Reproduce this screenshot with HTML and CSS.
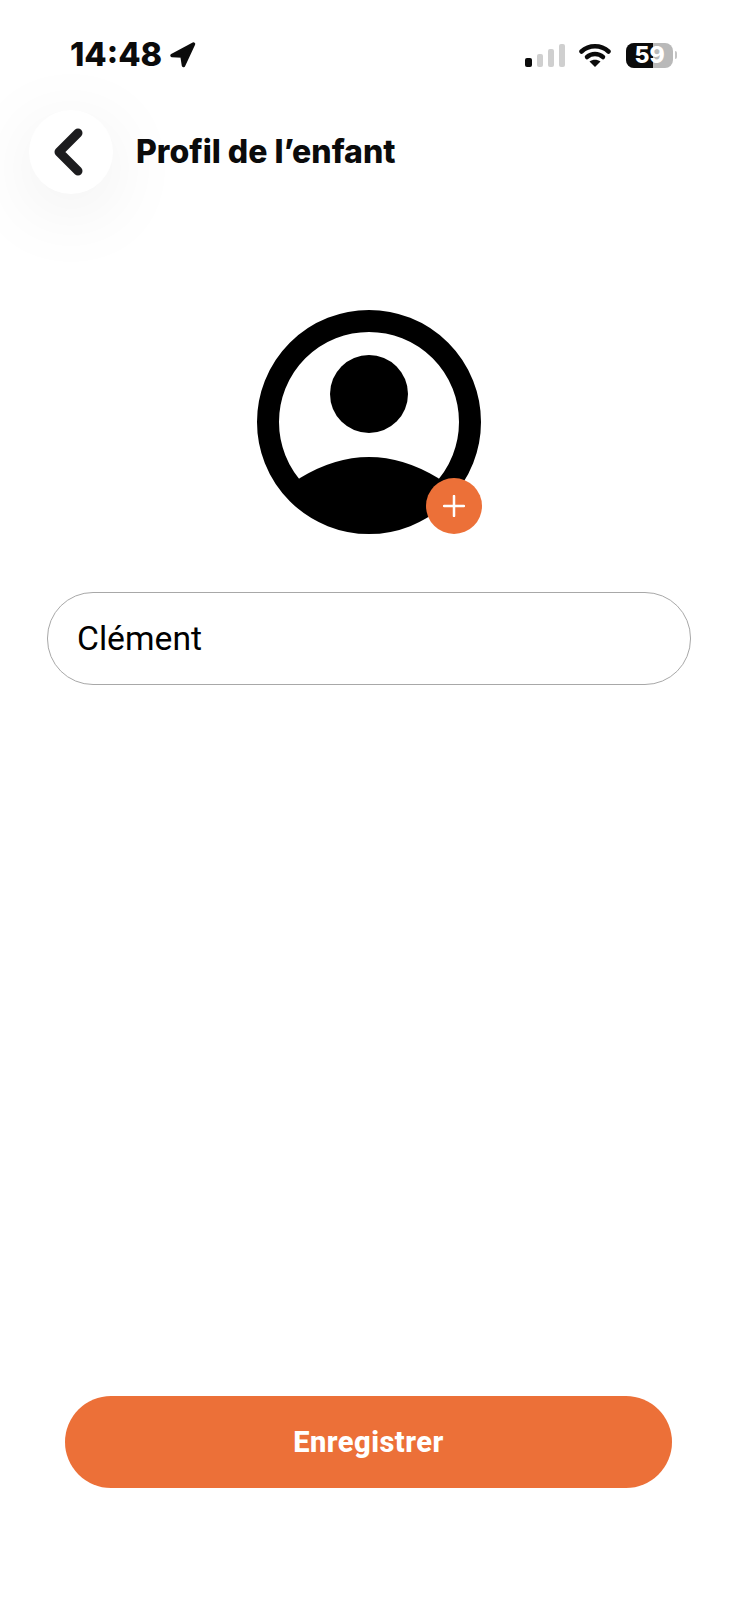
FILE: index.html
```html
<!DOCTYPE html>
<html lang="fr">
<head>
    <meta charset="UTF-8">
    <meta name="viewport" content="width=device-width, initial-scale=1.0">
    <title>Profil de l'enfant</title>
    <link rel="stylesheet" href="styles.css">
</head>
<body>
    <div class="status-bar">
        <div class="status-left">
            <span class="time">14:48</span>
            <svg class="location" width="27" height="26" viewBox="0 0 27 26">
                <path d="M24.500 2 L3 13.500 L13 14 L14.500 23.500 Z" fill="#0b0b0b" stroke="#0b0b0b" stroke-width="3.500" stroke-linejoin="round"/>
            </svg>
        </div>
        <div class="status-right">
            <div class="signal">
                <span class="bar bar-1"></span>
                <span class="bar bar-2"></span>
                <span class="bar bar-3"></span>
                <span class="bar bar-4"></span>
            </div>
            <svg class="wifi" width="32" height="24" viewBox="0 0 32 24">
                <path d="M2.500 8.500 C10 1.500 22 1.500 29.500 8.500" fill="none" stroke="#0b0b0b" stroke-width="4.500" stroke-linecap="round"/>
                <path d="M8 14 C12.500 10 19.500 10 24 14" fill="none" stroke="#0b0b0b" stroke-width="4.500" stroke-linecap="round"/>
                <path d="M16 24 L10.500 18.500 C14 16 18 16 21.500 18.500 Z" fill="#0b0b0b"/>
            </svg>
            <div class="battery">
                <div class="battery-body">
                    <span class="battery-level"></span>
                    <span class="battery-text">59</span>
                </div>
                <span class="battery-nub"></span>
            </div>
        </div>
    </div>

    <div class="nav">
        <button class="back-btn" aria-label="Retour">
            <svg width="30" height="48" viewBox="0 0 30 48">
                <path d="M25 5 L6 24 L25 43" fill="none" stroke="#1c1c1e" stroke-width="9" stroke-linecap="round" stroke-linejoin="round"/>
            </svg>
        </button>
        <h1 class="title">Profil de l’enfant</h1>
    </div>

    <div class="avatar">
        <svg width="224" height="224" viewBox="0 0 224 224">
            <circle cx="112" cy="112" r="101" fill="#fff" stroke="#000" stroke-width="22"/>
            <circle cx="112" cy="84" r="39" fill="#000"/>
            <path d="M43 168 Q112 126 181 168 L190 175 A100 100 0 0 1 34 175 Z" fill="#000"/>
        </svg>
        <div class="avatar-add">
            <svg width="22" height="22" viewBox="0 0 22 22">
                <path d="M11 1 V21 M1 11 H21" stroke="#fff" stroke-width="2.500" stroke-linecap="round"/>
            </svg>
        </div>
    </div>

    <div class="name-field">Clément</div>

    <button class="save-btn">Enregistrer</button>
</body>
</html>
```

FILE: styles.css
```css
* {
    box-sizing: border-box;
}
body {
    margin: 0;
    height: 1600px;
    overflow: hidden;
    background: #fff;
    color: #0b0b0b;
    font-family: 'Inter', sans-serif;
    display: flex;
    flex-direction: column;
}
.status-bar {
    display: flex;
    justify-content: space-between;
    align-items: center;
    height: 26px;
    margin-top: 42px;
    padding: 0 61px 0 70px;
}
.status-left {
    display: flex;
    align-items: center;
    gap: 7px;
}
.time {
    font-size: 32.5px;
    font-weight: 800;
    line-height: 26px;
}
.status-right {
    display: flex;
    align-items: center;
    gap: 14px;
}
.signal {
    display: flex;
    align-items: flex-end;
    gap: 5px;
    height: 23px;
}
.bar {
    width: 6px;
    background: #cfcfcf;
    border-radius: 2px;
}
.bar-1 {
    width: 7px;
    height: 9px;
    background: #0b0b0b;
}
.bar-2 {
    height: 13px;
}
.bar-3 {
    height: 18px;
}
.bar-4 {
    height: 23px;
}
.wifi {
    margin-right: 1px;
}
.battery {
    display: flex;
    align-items: center;
    gap: 2px;
}
.battery-body {
    position: relative;
    width: 47px;
    height: 25px;
    border-radius: 8px;
    background: #b9b9b9;
    display: flex;
    align-items: center;
    justify-content: center;
}
.battery-level {
    position: absolute;
    left: 0;
    top: 0;
    bottom: 0;
    width: 57%;
    border-radius: 8px 0 0 8px;
    background: #0b0b0b;
}
.battery-text {
    position: relative;
    color: #fff;
    font-size: 23px;
    font-weight: 800;
    line-height: 25px;
}
.battery-nub {
    width: 2px;
    height: 8px;
    background: #c4c4c4;
    border-radius: 0 2px 2px 0;
}
.nav {
    display: flex;
    align-items: center;
    gap: 23px;
    margin-top: 42px;
    padding-left: 29px;
}
.back-btn {
    width: 84px;
    height: 84px;
    padding: 0;
    border: none;
    border-radius: 50%;
    background: #fff;
    box-shadow: 0 16px 80px rgba(0, 0, 0, 0.08);
    display: flex;
    align-items: center;
    justify-content: center;
}
.back-btn svg {
    margin-right: 6px;
}
.title {
    margin: 0;
    font-size: 32px;
    font-weight: 800;
    line-height: 36px;
}
.avatar {
    position: relative;
    align-self: center;
    width: 224px;
    height: 224px;
    margin-top: 116px;
}
.avatar svg {
    display: block;
}
.avatar-add {
    position: absolute;
    right: -1px;
    bottom: 0;
    width: 56px;
    height: 56px;
    border-radius: 50%;
    background: #ec7038;
    display: flex;
    align-items: center;
    justify-content: center;
}
.name-field {
    height: 93px;
    margin: 58px 47px 0;
    padding-left: 29px;
    border: 1.5px solid #a8a8a8;
    border-radius: 46px;
    display: flex;
    align-items: center;
    font-family: 'Roboto', sans-serif;
    font-size: 33.7px;
    font-weight: 450;
    color: #000;
}
.save-btn {
    height: 92px;
    margin: auto 66px 112px 65px;
    border: none;
    border-radius: 46px;
    background: #ec7038;
    color: #fff;
    font-family: 'Roboto', sans-serif;
    font-size: 29px;
    font-weight: 800;
    letter-spacing: 0.5px;
}
```
